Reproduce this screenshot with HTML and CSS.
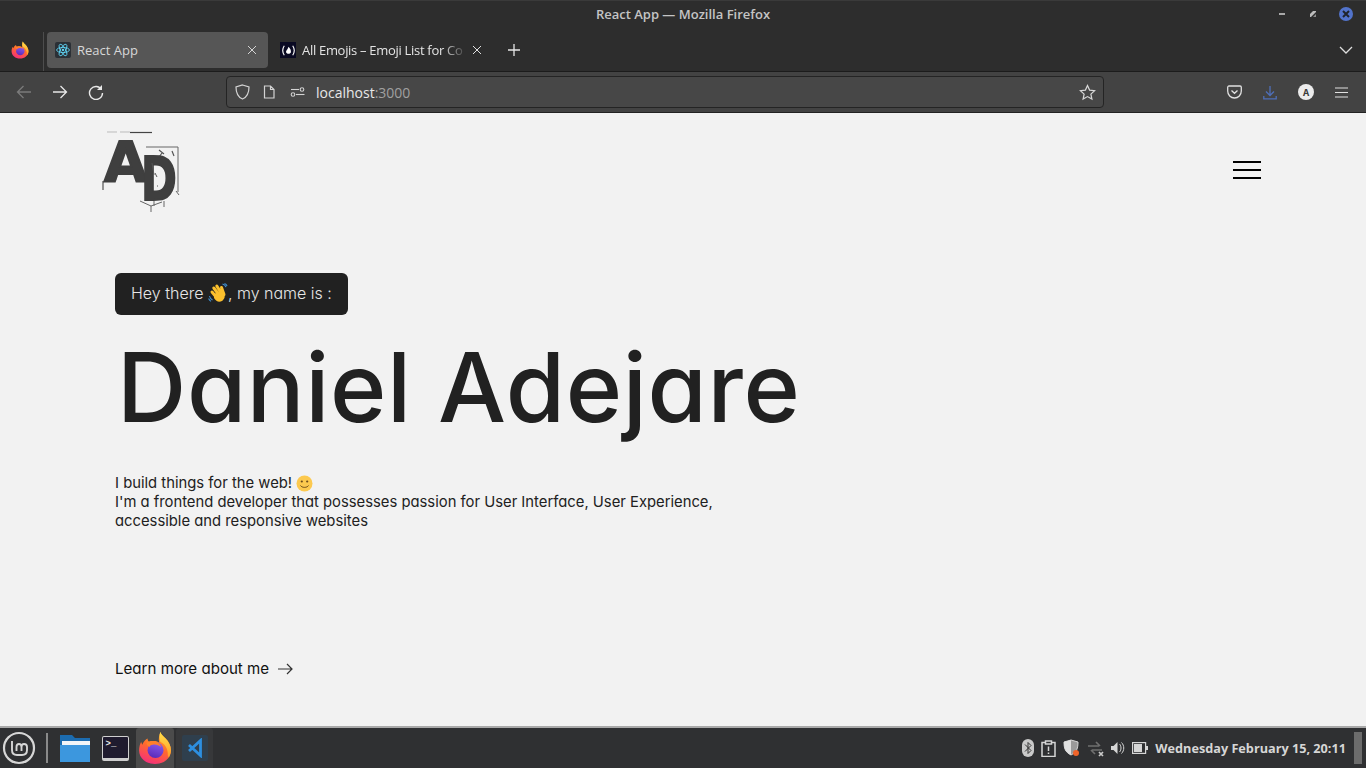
FILE: index.html
```html
<!DOCTYPE html>
<html lang="en">
<head>
    <meta charset="UTF-8">
    <meta name="viewport" content="width=device-width, initial-scale=1.0">
    <title>React App</title>
    <link rel="stylesheet" href="styles.css">
</head>
<body>
    <svg class="defs" width="0" height="0">
        <defs>
            <linearGradient id="fox-outer" x1="0.75" y1="0" x2="0.35" y2="1">
                <stop offset="0" stop-color="#ffb52e"/>
                <stop offset="0.5" stop-color="#ff6a2c"/>
                <stop offset="1" stop-color="#f5307a"/>
            </linearGradient>
            <linearGradient id="fox-tail" x1="0.5" y1="0" x2="0.5" y2="1">
                <stop offset="0" stop-color="#ffe04a"/>
                <stop offset="1" stop-color="#ff9a26"/>
            </linearGradient>
            <linearGradient id="fox-inner" x1="0.7" y1="0" x2="0.4" y2="1">
                <stop offset="0" stop-color="#8a5cf0"/>
                <stop offset="1" stop-color="#5b2bb8"/>
            </linearGradient>
            <symbol id="firefox" viewBox="0 0 32 32">
                <path d="M21 1c1 3 3 4 5 6 3 3 5 7 5 11 0 8-7 13-15 13S1 26 1 18c0-3 1-6 2-8 0 1 1 2 1 3 1-3 3-5 5-6 0 2 1 3 2 3 3-1 7-1 9 1-1-3 0-7 1-10z" fill="url(#fox-outer)"/>
                <path d="M21 1c1 3 3 4 5 6 3 3 5 7 5 11 0 3-1 5-2 7-1-1-1-2-1-4 0-5-3-9-7-11-1-3-1-6 0-9z" fill="url(#fox-tail)"/>
                <circle cx="16.500" cy="18" r="7.500" fill="url(#fox-inner)"/>
                <path d="M8 11c3-2 8-2 11 0 1 1 2 2 3 4-3-2-6-3-8-2-2 0-3 1-3 2-2-1-3-2-3-4z" fill="#ff7f2a"/>
            </symbol>
        </defs>
    </svg>

    <div class="title-bar">
        <span class="window-title">React App — Mozilla Firefox</span>
        <div class="window-controls">
            <span class="win-min"></span>
            <svg class="win-max" width="8" height="8" viewBox="0 0 8 8"><path d="M1 4l3-3h3v1L2 7H1z" fill="#bdbdbd"/><path d="M7 4v3H4z" fill="#8d8d8d"/></svg>
            <span class="win-close">
                <svg width="14" height="14" viewBox="0 0 14 14"><path d="M4 4l6 6M10 4l-6 6" stroke="#20242c" stroke-width="2"/></svg>
            </span>
        </div>
    </div>

    <div class="tab-bar">
        <div class="fox-slot"><svg width="18" height="18"><use href="#firefox"/></svg></div>
        <div class="tab active">
            <span class="favicon react">
                <svg width="14" height="14" viewBox="0 0 24 24" fill="none" stroke="#61dafb" stroke-width="1.4">
                    <ellipse cx="12" cy="12" rx="11" ry="4.4"/>
                    <ellipse cx="12" cy="12" rx="11" ry="4.4" transform="rotate(60 12 12)"/>
                    <ellipse cx="12" cy="12" rx="11" ry="4.4" transform="rotate(120 12 12)"/>
                    <circle cx="12" cy="12" r="2" fill="#61dafb" stroke="none"/>
                </svg>
            </span>
            <span class="tab-label">React App</span>
            <svg class="tab-close" width="10" height="10" viewBox="0 0 10 10"><path d="M1 1l8 8M9 1l-8 8" stroke="#d4d4d4" stroke-width="1"/></svg>
        </div>
        <div class="tab">
            <span class="favicon fcc">
                <svg width="15" height="15" viewBox="0 0 16 16" fill="none" stroke="#fff" stroke-width="1.2">
                    <path d="M3.500 3C1.500 6 1.500 10 3.500 13M12.500 3c2 3 2 7 0 10"/>
                    <path d="M8 4c2 2 3 4 2.500 6-.5 1-1.500 1.500-2.500 1.500S6 11 5.500 10C5 8 7 7.500 8 4z" fill="#fff" stroke="none"/>
                </svg>
            </span>
            <span class="tab-label fade">All Emojis – Emoji List for Co</span>
            <svg class="tab-close" width="10" height="10" viewBox="0 0 10 10"><path d="M1 1l8 8M9 1l-8 8" stroke="#e0e0e0" stroke-width="1"/></svg>
        </div>
        <svg class="new-tab" width="14" height="14" viewBox="0 0 14 14"><path d="M7 1v12M1 7h12" stroke="#e6e6e6" stroke-width="1.300"/></svg>
        <svg class="tab-list" width="14" height="8" viewBox="0 0 14 8" fill="none"><path d="M1 1l6 6 6-6" stroke="#dedede" stroke-width="1.300"/></svg>
    </div>

    <div class="nav-bar">
        <div class="nav-buttons">
            <svg width="16" height="14" viewBox="0 0 16 14" fill="none" stroke="#7b7b7b" stroke-width="1.300"><path d="M15 7H1.500M7.500 1l-6 6 6 6"/></svg>
            <svg width="16" height="14" viewBox="0 0 16 14" fill="none" stroke="#e8e8e8" stroke-width="1.300"><path d="M1 7h13.500M8.500 1l6 6-6 6"/></svg>
            <svg width="16" height="16" viewBox="0 0 16 16" fill="none" stroke="#e8e8e8" stroke-width="1.400"><path d="M13.500 5.500A6.500 6.500 0 1 0 14.500 9"/><path d="M14 1v5H9" fill="#e8e8e8" stroke="none"/></svg>
        </div>
        <div class="url-bar">
            <svg width="15" height="16" viewBox="0 0 15 16" fill="none" stroke="#d4d4d4" stroke-width="1.200"><path d="M7.500 1L14 3c0 6-1.500 10-6.500 12C2.500 13 1 9 1 3z"/></svg>
            <svg class="page-icon" width="12" height="14" viewBox="0 0 12 14" fill="none" stroke="#d4d4d4" stroke-width="1.200"><path d="M1.500 1h6L11 4.500v8.500h-9.500zM7.500 1v3.500H11"/></svg>
            <svg class="perm-icon" width="15" height="10" viewBox="0 0 15 10" fill="none" stroke="#d4d4d4" stroke-width="1.100"><path d="M1 2.500h8"/><circle cx="12" cy="2.500" r="1.800"/><circle cx="3" cy="7.500" r="1.800"/><path d="M6 7.500h8.500"/></svg>
            <span class="url-text">localhost<span class="url-port">:3000</span></span>
            <svg class="star" width="17" height="17" viewBox="0 0 17 17" fill="none" stroke="#d8d8d8" stroke-width="1.200"><path d="M8.500 1.500l2.100 4.600 5 .6-3.700 3.400 1 5-4.400-2.500-4.400 2.500 1-5L1.400 6.700l5-.6z"/></svg>
        </div>
        <div class="nav-actions">
            <svg width="15" height="14" viewBox="0 0 15 14" fill="none" stroke="#e0e0e0" stroke-width="1.300"><path d="M2 1h11c.7 0 1.300.6 1.300 1.300V6c0 4-3 7-6.800 7S.7 10 .7 6V2.300C.7 1.600 1.300 1 2 1z"/><path d="M4.500 5.500l3 2.800 3-2.800"/></svg>
            <svg width="14" height="15" viewBox="0 0 14 15" fill="none" stroke="#4f6fb8" stroke-width="1.300"><path d="M7 1v9M3 6.500L7 10.500l4-4M.8 11v2.800h12.400V11"/></svg>
            <span class="avatar">A</span>
            <svg width="13" height="11" viewBox="0 0 13 11" fill="none" stroke="#e0e0e0" stroke-width="1.200"><path d="M0 1h13M0 5.500h13M0 10h13"/></svg>
        </div>
    </div>

    <main class="page">
        <header class="site-header">
            <svg class="logo" width="82" height="84" viewBox="0 0 82 84" aria-label="AD logo">
                <path d="M5 3h10M18 3h10" stroke="#bbb" stroke-width="1" fill="none"/>
                <path d="M28 3.500h22" stroke="#444" stroke-width="1.200" fill="none"/>
                <path d="M44 18h32v45M74 62l3 4M38 72l11 5 11-4M49 77v6M52 72v5M62 72v6" stroke="#666" stroke-width="1" fill="none"/>
                <path d="M57 21l5 4M60 24l-3 4M70 22l2 5M1 52v9M13 50l1 1" stroke="#555" stroke-width="1.200" fill="none"/>
                <text class="logo-a" x="2" y="52">A</text>
                <text class="logo-d" transform="translate(39 71) scale(.72 1)">D</text>
                <path d="M50 34l2 12M53 44l2 4M56 57h-1" stroke="#555" stroke-width="1" fill="none"/>
            </svg>
            <button class="menu-btn" aria-label="Menu"><span></span><span></span><span></span></button>
        </header>

        <section class="hero">
            <div class="greeting">Hey there <svg class="emoji" width="20" height="20" viewBox="0 0 20 20">
                    <path d="M14.500 1c1.600.4 3 1.600 3.500 3.200M16.500 .6c1 .4 2 1.200 2.600 2.400M1.500 13c.4 1.800 1.500 3.200 3 4M.6 15.500c.5 1.200 1.300 2.200 2.400 2.900" stroke="#3f8fd2" stroke-width="1.100" fill="none"/>
                    <g stroke="#fbc02d" stroke-width="3" stroke-linecap="round" fill="none">
                        <path d="M4 9l5 6M5.800 5l6 8M8.800 3l5 8M13.500 4.500l2.500 7"/>
                    </g>
                    <path d="M6 11c1-1 8-3 10-1 1.500 3 .5 6-2 8-3 1.500-6 .5-8-3z" fill="#fbc02d"/>
                </svg>, my name is :</div>
            <h1 class="name">Daniel Adejare</h1>
            <p class="intro">I build things for the web!
                <svg class="emoji" width="17" height="17" viewBox="0 0 17 17">
                    <circle cx="8.500" cy="8.500" r="8" fill="#fcc94f"/>
                    <circle cx="5.800" cy="6.500" r="1.100" fill="#6b4a1a"/>
                    <circle cx="11.200" cy="6.500" r="1.100" fill="#6b4a1a"/>
                    <path d="M4.500 10.500c1.500 2.500 6.500 2.500 8 0" stroke="#6b4a1a" stroke-width="1" fill="none"/>
                </svg>
                <br>I'm a frontend developer that possesses passion for User Interface, User Experience,
                <br>accessible and responsive websites
            </p>
            <a class="learn-more" href="#">Learn more about me
                <svg width="15" height="12" viewBox="0 0 15 12" fill="none" stroke="#333" stroke-width="1.200"><path d="M0 6h14M9 1l5 5-5 5"/></svg>
            </a>
        </section>
    </main>

    <footer class="taskbar">
        <div class="task-left">
            <svg class="mint" width="34" height="34" viewBox="0 0 34 34" fill="none" stroke="#d6d6d6">
                <circle cx="17" cy="17" r="15" stroke-width="2.200"/>
                <path d="M10 10v9c0 3 2 5 5 5h5c3 0 5-2 5-5v-3c0-2-1.500-3-3-3s-2.500 1-2.500 3v4M19.500 16c0-2-1-3-2.500-3s-2.500 1-2.500 3v4" stroke-width="1.900"/>
            </svg>
            <span class="task-sep"></span>
            <span class="task-item">
                <svg width="32" height="30" viewBox="0 0 32 30">
                    <path d="M1 2h12l3 3h15v24H1z" fill="#1c6cb0"/>
                    <rect x="3" y="8" width="28" height="5" fill="#f2f5f8"/>
                    <path d="M1 12h30v17H1z" fill="#3c97de"/>
                </svg>
            </span>
            <span class="task-item">
                <span class="term">&gt;_</span>
            </span>
            <span class="task-item current"><svg width="34" height="34"><use href="#firefox"/></svg></span>
            <span class="task-item open">
                <span class="vscode">
                    <svg width="20" height="20" viewBox="0 0 20 20" fill="none" stroke="#2d8fe0" stroke-width="2.800"><path d="M15.500 2.500v15L4 7M15.500 17.500V2.500L4 13"/></svg>
                </span>
            </span>
        </div>
        <div class="tray">
            <svg width="12" height="18" viewBox="0 0 12 18"><rect width="12" height="18" rx="6" fill="#c9c9c9"/><path d="M3 5.500l6 6-3 3v-11l3 3-6 6" stroke="#333" fill="none"/></svg>
            <svg width="15" height="17" viewBox="0 0 15 17" fill="none" stroke="#d6d6d6" stroke-width="1.500"><path d="M4.500 2.500H1v14h13v-14h-3.500"/><path d="M4.500 1h6v3h-6zM7.500 6.500v4.500M7.500 12.500v1.500"/></svg>
            <svg width="17" height="18" viewBox="0 0 17 18"><path d="M8 1l7 2c0 6-1 10-7 13C2 13 1 9 1 3z" fill="#9a9a9a" stroke="#d6d6d6"/><path d="M8 1v15C2 13 1 9 1 3z" fill="#e0e0e0"/><circle cx="13" cy="14" r="3" fill="#f0642a"/></svg>
            <svg width="17" height="17" viewBox="0 0 17 17" fill="none" stroke="#6f6f6f" stroke-width="1.700"><path d="M1 6h11M9 2l4 4M15 10H5M8 14l-4-4"/><path d="M12 12l4 4M16 12l-4 4" stroke="#c9c9c9"/></svg>
            <svg width="14" height="14" viewBox="0 0 14 14" fill="#d6d6d6"><path d="M0 5h2.500L6.500 1v12l-4-4H0z"/><path d="M8.500 3c2 2 2 6 0 8M10.500 1.500c3 3 3 8 0 11" stroke="#d6d6d6" fill="none"/></svg>
            <svg width="16" height="12" viewBox="0 0 16 12"><rect x=".6" y=".6" width="13" height="10.800" fill="none" stroke="#d6d6d6" stroke-width="1.200"/><rect x="2" y="2" width="8" height="8" fill="#d6d6d6"/><rect x="14" y="4" width="2" height="4" fill="#d6d6d6"/></svg>
            <span class="clock">Wednesday February 15, 20:11</span>
            <span class="show-desktop"></span>
        </div>
    </footer>
</body>
</html>
```

FILE: styles.css
```css
* {
    margin: 0;
    padding: 0;
    box-sizing: border-box;
}

body {
    width: 1366px;
    height: 768px;
    display: flex;
    flex-direction: column;
    overflow: hidden;
    font-family: 'Inter', sans-serif;
    background: #f2f2f2;
}

.defs {
    position: absolute;
}

/* firefox window chrome */
.title-bar {
    height: 32px;
    flex: none;
    display: flex;
    align-items: center;
    justify-content: center;
    position: relative;
    background: #2d2d2d;
    border-top: 1px solid #3a3a3a;
    padding-bottom: 5px;
}

.window-title {
    font-family: 'Open Sans', sans-serif;
    font-size: 13px;
    font-weight: 600;
    color: #c4c4c4;
}

.window-controls {
    position: absolute;
    top: 6px;
    right: 13px;
    display: flex;
    align-items: center;
    gap: 24px;
}

.win-min {
    width: 6px;
    height: 2px;
    background: #a8a8a8;
}

.win-close {
    width: 14px;
    height: 14px;
    margin-left: -2px;
    border-radius: 50%;
    background: #5273cb;
    display: flex;
}

.tab-bar {
    height: 39px;
    flex: none;
    display: flex;
    align-items: flex-start;
    background: #2d2d2d;
}

.fox-slot {
    width: 44px;
    height: 43px;
    margin-top: -4px;
    flex: none;
    display: flex;
    align-items: center;
    justify-content: center;
    padding-right: 4px;
    border-right: 1px solid #4d4d4d;
}

.tab {
    width: 221px;
    height: 36px;
    margin-left: 4px;
    flex: none;
    display: flex;
    align-items: center;
    padding: 0 11px 0 8px;
    border-radius: 4px;
    font-family: 'Open Sans', sans-serif;
    font-size: 13px;
    color: #e4e4e4;
}

.tab.active {
    margin-left: 3px;
    background: #565656;
}

.tab.active .tab-label {
    color: #d8d8d8;
}

.favicon {
    width: 16px;
    height: 16px;
    flex: none;
    margin-right: 6px;
    display: flex;
    align-items: center;
    justify-content: center;
}

.favicon.react {
    background: #2b3036;
    border-radius: 2px;
}

.favicon.fcc {
    background: #0a0a23;
}

.tab-label {
    flex: 1;
    white-space: nowrap;
    overflow: hidden;
}

.tab-label.fade {
    letter-spacing: -0.3px;
    -webkit-mask-image: linear-gradient(to right, #000 84%, transparent 100%);
    mask-image: linear-gradient(to right, #000 84%, transparent 100%);
}

.tab-close {
    flex: none;
    margin-left: 4px;
}

.new-tab {
    margin: 11px 0 0 14px;
}

.tab-list {
    margin: 14px 13px 0 auto;
}

.nav-bar {
    height: 42px;
    flex: none;
    display: flex;
    align-items: center;
    background: #434343;
    border-top: 1px solid #1c1c1c;
    border-bottom: 1px solid #232323;
}

.nav-buttons {
    width: 226px;
    flex: none;
    display: flex;
    align-items: center;
    gap: 20px;
    padding-left: 16px;
}

.url-bar {
    width: 878px;
    height: 32px;
    flex: none;
    display: flex;
    align-items: center;
    padding: 0 7px 0 8px;
    background: #474747;
    border: 1px solid #242424;
    border-radius: 4px;
    font-family: 'Open Sans', sans-serif;
    font-size: 14px;
    color: #e8e8e8;
}

.page-icon {
    margin-left: 13px;
}

.perm-icon {
    margin-left: 15px;
}

.url-text {
    margin-left: 11px;
}

.url-port {
    color: #a0a0a0;
}

.star {
    margin-left: auto;
}

.nav-actions {
    flex: 1;
    display: flex;
    align-items: center;
    justify-content: flex-end;
    gap: 21px;
    padding-right: 18px;
}

.avatar {
    width: 16px;
    height: 16px;
    border-radius: 50%;
    background: #ececec;
    color: #3a3a3a;
    font-size: 9px;
    font-weight: 700;
    display: flex;
    align-items: center;
    justify-content: center;
}

/* the page itself */
.page {
    flex: 1;
    min-height: 0;
    background: #f2f2f2;
    color: #212121;
    padding: 16px 105px 0 102px;
}

.site-header {
    display: flex;
    justify-content: space-between;
    align-items: flex-start;
}

.logo-a,
.logo-d {
    font-family: 'DejaVu Sans', sans-serif;
    font-weight: 700;
    fill: #3f3f3f;
    stroke: #3f3f3f;
    stroke-width: 2;
}

.logo-a {
    font-size: 56px;
}

.logo-d {
    font-size: 60px;
}

.menu-btn {
    width: 28px;
    margin-top: 32px;
    display: flex;
    flex-direction: column;
    gap: 6px;
    background: none;
    border: none;
}

.menu-btn span {
    height: 2px;
    background: #000;
}

.hero {
    margin-left: 13px;
    padding-top: 60px;
    font-feature-settings: "cv11";
}

.greeting {
    display: inline-block;
    height: 42px;
    line-height: 41px;
    padding: 0 16px;
    white-space: nowrap;
    background: #212121;
    color: #e6e6e6;
    border-radius: 6px;
    font-size: 16px;
    font-weight: 300;
}

.name {
    margin-top: 16px;
    margin-left: 2px;
    font-size: 96px;
    letter-spacing: 0.6px;
    line-height: 112px;
    font-weight: 450;
    white-space: nowrap;
    color: #212121;
}

.intro {
    margin-top: 31px;
    font-size: 14.800px;
    line-height: 19px;
    color: #212121;
}

.emoji {
    vertical-align: -4px;
}

.learn-more {
    margin-top: 128px;
    display: flex;
    align-items: center;
    gap: 9px;
    font-size: 15.100px;
    line-height: 19px;
    color: #111;
    text-decoration: none;
}

/* mint panel */
.taskbar {
    height: 42px;
    flex: none;
    display: flex;
    justify-content: space-between;
    background: #2f3032;
    border-top: 2px solid #a9a9a9;
}

.task-left {
    display: flex;
    align-items: center;
}

.mint {
    margin-left: 2px;
}

.task-sep {
    width: 2px;
    height: 30px;
    margin: 0 6px 0 10px;
    background: #8a8a8a;
}

.task-item {
    width: 38px;
    height: 40px;
    margin-left: 2px;
    display: flex;
    align-items: center;
    justify-content: center;
    border-radius: 3px 3px 0 0;
}

.task-item.current {
    background: #4b4b4b;
}

.task-item.open {
    width: 37px;
    background: #37383a;
}

.term {
    width: 27px;
    height: 25px;
    background: #1f1b2e;
    border: 1px solid #cfcfcf;
    border-bottom-width: 3px;
    border-radius: 2px;
    color: #e8e8e8;
    font-family: 'Liberation Mono', monospace;
    font-size: 9px;
    font-weight: 700;
    line-height: 14px;
    padding-left: 3px;
}

.vscode {
    width: 26px;
    height: 26px;
    display: flex;
    align-items: center;
    justify-content: center;
    background: #2f3f4d;
    border-radius: 2px;
}

.tray {
    display: flex;
    align-items: center;
    gap: 7px;
}

.clock {
    font-family: 'Open Sans', sans-serif;
    font-size: 12.700px;
    font-weight: 700;
    color: #d6d6d6;
    white-space: nowrap;
}

.show-desktop {
    width: 8px;
    height: 32px;
    margin-left: 1px;
    margin-right: 4px;
    background: #6c6c6c;
}
```
